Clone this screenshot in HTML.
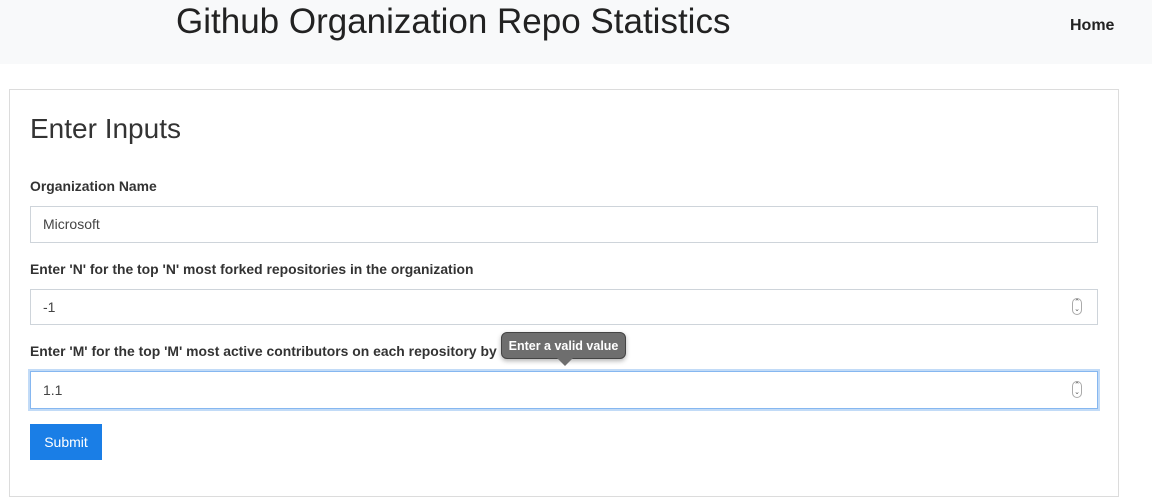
<!DOCTYPE html>
<html><head><style>
body{margin:0;width:1152px;height:502px;background:#fff;font-family:"Liberation Sans",sans-serif;color:#212529;position:relative;overflow:hidden}
.hdr{position:absolute;left:0;top:0;width:1152px;height:64px;background:#f8f9fa}
.t{position:absolute;left:176px;top:2px;font-size:35px;white-space:nowrap;color:#222}
.home{position:absolute;left:1070px;top:17px;font-weight:bold;font-size:16px;color:#222;transform-origin:0 0;transform:scaleX(1.0)}
.card{position:absolute;left:9px;top:89px;width:1108px;height:406px;border:1px solid #dcdcdc}
.h{position:absolute;left:30px;top:113px;font-size:28px;color:#333;white-space:nowrap}
.l{position:absolute;left:30px;font-size:13.5px;font-weight:bold;white-space:nowrap;transform-origin:0 0;transform:scaleX(1.03);color:#333}
.in{position:absolute;left:30px;width:1068px;border:1px solid #ced4da;background:#fff;font-size:14px;color:#444;box-sizing:border-box;padding-left:12px}
.sp{position:absolute;right:15px;top:50%;margin-top:-9px;width:10px;height:17px;border:1px solid #aaa;border-radius:5px;box-sizing:border-box;font-size:7px;line-height:7px;text-align:center;color:#555}
.btn{position:absolute;left:30px;top:424px;width:72px;height:36px;background:#1a7ee6;color:#fff;font-size:14px;line-height:36px;text-align:center}
.tip{position:absolute;left:501px;top:332px;width:125px;height:27px;background:#6e6e6e;border:1px solid #444;border-radius:6px;color:#fff;font-size:12.5px;font-weight:bold;line-height:26px;text-align:center;box-sizing:border-box;box-shadow:0 2px 5px rgba(0,0,0,.3)}
.tip:after{content:"";position:absolute;left:55px;top:25px;border:8px solid transparent;border-top-color:#6e6e6e}
</style></head><body>
<div class="hdr"><div class="t">Github Organization Repo Statistics</div><div class="home">Home</div></div>
<div class="card"></div>
<div class="h">Enter Inputs</div>
<div class="l" style="top:179px">Organization Name</div>
<div class="in" style="top:206px;height:37px;line-height:35px">Microsoft</div>
<div class="l" style="top:262px">Enter 'N' for the top 'N' most forked repositories in the organization</div>
<div class="in" style="top:289px;height:36px;line-height:34px">-1<div class="sp">⌃<br>⌄</div></div>
<div class="l" style="top:344px">Enter 'M' for the top 'M' most active contributors on each repository by c</div>
<div class="in" style="top:371px;height:38px;line-height:36px;border-color:#86b7f0;box-shadow:0 0 0 2px #c2dbf7">1.1<div class="sp">⌃<br>⌄</div></div>
<div class="tip">Enter a valid value</div>
<div class="btn">Submit</div>
</body></html>
